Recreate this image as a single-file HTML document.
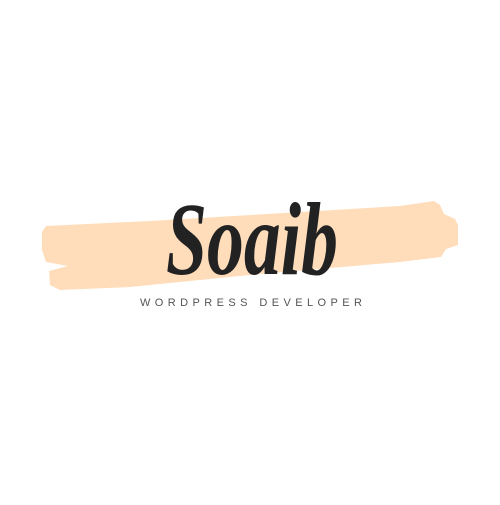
<!DOCTYPE html>
<html><head><style>
html,body{margin:0;padding:0;background:#fff;}
</style></head><body>
<svg width="500" height="500" viewBox="0 0 500 500" xmlns="http://www.w3.org/2000/svg">
<rect width="500" height="500" fill="#fff"/>
<polygon fill="#FFDDBB" points="42,232 46,226 150,221 300,212 400,206 434,201 440,205 444,214 455,219 458,225 458,245 446,249 441,257 400,262 250,275 130,287 60,290 50,285 49,271 68,266 46,262 42,250"/>
<text x="166" y="274" font-family="Liberation Serif, serif" font-style="italic" font-weight="bold" font-size="104" fill="#222" textLength="172" lengthAdjust="spacingAndGlyphs">Soaib</text>
<text x="140" y="306" font-family="Liberation Sans, sans-serif" font-size="11" fill="#555" textLength="222" lengthAdjust="spacing">WORDPRESS DEVELOPER</text>
</svg>
</body></html>
